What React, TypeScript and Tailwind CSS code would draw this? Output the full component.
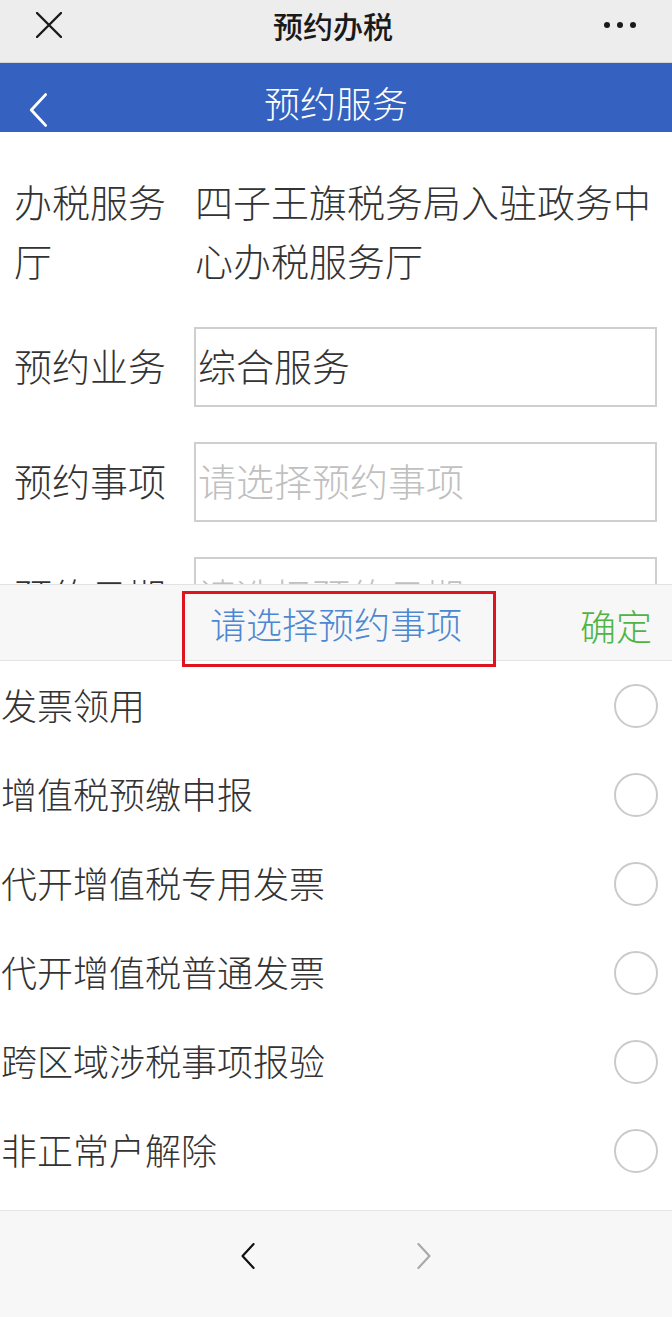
import { useState } from "react";

const items = [
  "发票领用",
  "增值税预缴申报",
  "代开增值税专用发票",
  "代开增值税普通发票",
  "跨区域涉税事项报验",
  "非正常户解除",
];

const font = { fontFamily: '"Noto Sans CJK SC", "Noto Sans", sans-serif' };

function Chevron({ dir, className }: { dir: "left" | "right"; className: string }) {
  return (
    <svg viewBox="0 0 20 32" className={className} fill="none">
      <path
        d={dir === "left" ? "M16 2 L3 16 L16 30" : "M4 2 L17 16 L4 30"}
        stroke="currentColor"
        strokeWidth="2.6"
        strokeLinecap="round"
        strokeLinejoin="round"
      />
    </svg>
  );
}

export default function App() {
  const [picked, setPicked] = useState<number | null>(null);

  return (
    <div className="w-[672px] h-[1317px] bg-white overflow-hidden flex flex-col font-light" style={font}>
      {/* wechat top bar */}
      <div className="h-[63px] shrink-0 bg-[#ededed] border-b border-[#d6d6d6] flex items-center justify-between px-[36px]">
        <svg viewBox="0 0 26 26" className="w-[26px] h-[26px] text-[#1a1a1a] -mt-[12px]">
          <path d="M1 1 L25 25 M25 1 L1 25" stroke="currentColor" strokeWidth="2.4" strokeLinecap="round" />
        </svg>
        <div className="text-[30px] font-medium text-[#1a1a1a] -mt-[12px]">预约办税</div>
        <div className="flex gap-[7px] -mt-[12px]">
          <span className="w-[6px] h-[6px] rounded-full bg-[#1a1a1a]" />
          <span className="w-[6px] h-[6px] rounded-full bg-[#1a1a1a]" />
          <span className="w-[6px] h-[6px] rounded-full bg-[#1a1a1a]" />
        </div>
      </div>

      {/* blue title bar */}
      <div className="h-[69px] shrink-0 bg-[#3562c0] relative flex items-center justify-center">
        <Chevron dir="left" className="absolute left-[28px] top-[28px] w-[22px] h-[38px] text-white" />
        <div className="text-[36px] text-white mt-[8px]">预约服务</div>
      </div>

      {/* form, covered by the picker below */}
      <div className="h-[452px] shrink-0 overflow-hidden pt-[39px] px-[14px] text-[38px] leading-[59px] text-[#333] flex flex-col gap-[35px]">
        <div className="flex mb-[3px]">
          <div className="w-[180px] shrink-0">办税服务厅</div>
          <div className="flex-1 pl-[1px]">四子王旗税务局入驻政务中心办税服务厅</div>
        </div>
        {[
          ["预约业务", "综合服务", false],
          ["预约事项", "请选择预约事项", true],
          ["预约日期", "请选择预约日期", true],
        ].map(([label, value, ph]) => (
          <div key={label as string} className="flex items-center">
            <div className="w-[180px] shrink-0 -mt-[5px]">{label}</div>
            <div
              className={`w-[463px] h-[80px] shrink-0 border-2 border-[#cfcfcf] flex items-center pl-[2px] ${
                ph ? "text-[#c0c0c0]" : "text-[#333]"
              }`}
            >
              <span className="-mt-[5px]">{value}</span>
            </div>
          </div>
        ))}
      </div>

      {/* picker */}
      <div className="flex-1 flex flex-col bg-white">
        <div className="h-[77px] shrink-0 bg-[#f7f7f7] border-t border-b border-[#e3e3e3] relative flex items-center justify-center">
          <div className="text-[36px] text-[#4d87d2]">请选择预约事项</div>
          <div className="absolute right-[20px] top-[18px] text-[36px] text-[#4fb443] leading-[44px]">确定</div>
          <div className="absolute left-[182px] top-[6px] w-[314px] h-[76px] border-[3px] border-[#e0141e]" />
        </div>
        <div className="flex flex-col pb-[15px]">
          {items.map((t, i) => (
            <div
              key={t}
              onClick={() => setPicked(i)}
              className="h-[89px] flex items-center justify-between pl-[1px] pr-[14px] text-[36px] text-[#333]"
            >
              <span className="-mt-[4px]">{t}</span>
              <span
                className={`w-[44px] h-[44px] rounded-full border-2 ${
                  picked === i ? "border-[#4fb443] bg-[#4fb443]" : "border-[#cacaca]"
                }`}
              />
            </div>
          ))}
        </div>
        <div className="flex-1 bg-[#f7f7f7] border-t border-[#e6e6e6] flex items-start justify-center gap-[158px] pt-[30px]">
          <Chevron dir="left" className="w-[17px] h-[30px] text-[#111]" />
          <Chevron dir="right" className="w-[17px] h-[30px] text-[#aaa]" />
        </div>
      </div>
    </div>
  );
}
